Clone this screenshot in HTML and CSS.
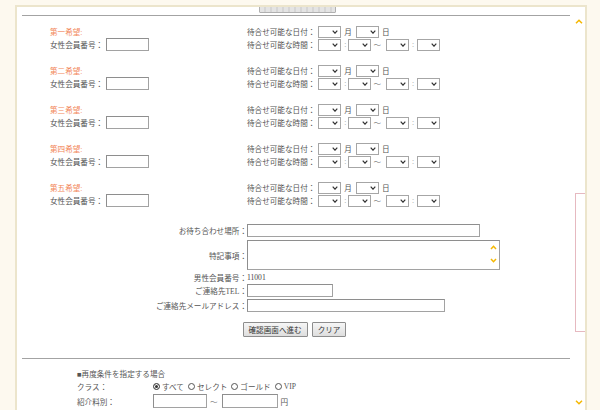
FILE: index.html
```html
<!DOCTYPE html>
<html lang="ja">
<head>
<meta charset="utf-8">
<link rel="stylesheet" href="styles.css">
</head>
<body>
<div class="frame">
  <div class="content">
    <div class="topbtn-wrap"><span class="btn topbtn"></span></div>
    <div class="rule"></div>

    <div class="wishes">
      <div class="wish">
        <div class="wl">
          <div class="line ttl">第一希望:</div>
          <div class="line">女性会員番号：<input class="inp w42 m3" type="text"></div>
        </div>
        <div class="wr">
          <div class="line">待合せ可能な日付：<span class="sel m3"><svg width="6" height="4" viewBox="0 0 6 4"><path d="M0.7 0.7L3 3.2L5.3 0.7"/></svg></span><span class="m3">月</span><span class="sel m4"><svg width="6" height="4" viewBox="0 0 6 4"><path d="M0.7 0.7L3 3.2L5.3 0.7"/></svg></span><span class="m3">日</span></div>
          <div class="line">待合せ可能な時間：<span class="sel m3"><svg width="6" height="4" viewBox="0 0 6 4"><path d="M0.7 0.7L3 3.2L5.3 0.7"/></svg></span><span class="col">:</span><span class="sel m2"><svg width="6" height="4" viewBox="0 0 6 4"><path d="M0.7 0.7L3 3.2L5.3 0.7"/></svg></span><span class="m2 wave">〜</span><span class="sel m5"><svg width="6" height="4" viewBox="0 0 6 4"><path d="M0.7 0.7L3 3.2L5.3 0.7"/></svg></span><span class="col m4">:</span><span class="sel m3"><svg width="6" height="4" viewBox="0 0 6 4"><path d="M0.7 0.7L3 3.2L5.3 0.7"/></svg></span></div>
        </div>
      </div>

      <div class="wish">
        <div class="wl">
          <div class="line ttl">第二希望:</div>
          <div class="line">女性会員番号：<input class="inp w42 m3" type="text"></div>
        </div>
        <div class="wr">
          <div class="line">待合せ可能な日付：<span class="sel m3"><svg width="6" height="4" viewBox="0 0 6 4"><path d="M0.7 0.7L3 3.2L5.3 0.7"/></svg></span><span class="m3">月</span><span class="sel m4"><svg width="6" height="4" viewBox="0 0 6 4"><path d="M0.7 0.7L3 3.2L5.3 0.7"/></svg></span><span class="m3">日</span></div>
          <div class="line">待合せ可能な時間：<span class="sel m3"><svg width="6" height="4" viewBox="0 0 6 4"><path d="M0.7 0.7L3 3.2L5.3 0.7"/></svg></span><span class="col">:</span><span class="sel m2"><svg width="6" height="4" viewBox="0 0 6 4"><path d="M0.7 0.7L3 3.2L5.3 0.7"/></svg></span><span class="m2 wave">〜</span><span class="sel m5"><svg width="6" height="4" viewBox="0 0 6 4"><path d="M0.7 0.7L3 3.2L5.3 0.7"/></svg></span><span class="col m4">:</span><span class="sel m3"><svg width="6" height="4" viewBox="0 0 6 4"><path d="M0.7 0.7L3 3.2L5.3 0.7"/></svg></span></div>
        </div>
      </div>

      <div class="wish">
        <div class="wl">
          <div class="line ttl">第三希望:</div>
          <div class="line">女性会員番号：<input class="inp w42 m3" type="text"></div>
        </div>
        <div class="wr">
          <div class="line">待合せ可能な日付：<span class="sel m3"><svg width="6" height="4" viewBox="0 0 6 4"><path d="M0.7 0.7L3 3.2L5.3 0.7"/></svg></span><span class="m3">月</span><span class="sel m4"><svg width="6" height="4" viewBox="0 0 6 4"><path d="M0.7 0.7L3 3.2L5.3 0.7"/></svg></span><span class="m3">日</span></div>
          <div class="line">待合せ可能な時間：<span class="sel m3"><svg width="6" height="4" viewBox="0 0 6 4"><path d="M0.7 0.7L3 3.2L5.3 0.7"/></svg></span><span class="col">:</span><span class="sel m2"><svg width="6" height="4" viewBox="0 0 6 4"><path d="M0.7 0.7L3 3.2L5.3 0.7"/></svg></span><span class="m2 wave">〜</span><span class="sel m5"><svg width="6" height="4" viewBox="0 0 6 4"><path d="M0.7 0.7L3 3.2L5.3 0.7"/></svg></span><span class="col m4">:</span><span class="sel m3"><svg width="6" height="4" viewBox="0 0 6 4"><path d="M0.7 0.7L3 3.2L5.3 0.7"/></svg></span></div>
        </div>
      </div>

      <div class="wish">
        <div class="wl">
          <div class="line ttl">第四希望:</div>
          <div class="line">女性会員番号：<input class="inp w42 m3" type="text"></div>
        </div>
        <div class="wr">
          <div class="line">待合せ可能な日付：<span class="sel m3"><svg width="6" height="4" viewBox="0 0 6 4"><path d="M0.7 0.7L3 3.2L5.3 0.7"/></svg></span><span class="m3">月</span><span class="sel m4"><svg width="6" height="4" viewBox="0 0 6 4"><path d="M0.7 0.7L3 3.2L5.3 0.7"/></svg></span><span class="m3">日</span></div>
          <div class="line">待合せ可能な時間：<span class="sel m3"><svg width="6" height="4" viewBox="0 0 6 4"><path d="M0.7 0.7L3 3.2L5.3 0.7"/></svg></span><span class="col">:</span><span class="sel m2"><svg width="6" height="4" viewBox="0 0 6 4"><path d="M0.7 0.7L3 3.2L5.3 0.7"/></svg></span><span class="m2 wave">〜</span><span class="sel m5"><svg width="6" height="4" viewBox="0 0 6 4"><path d="M0.7 0.7L3 3.2L5.3 0.7"/></svg></span><span class="col m4">:</span><span class="sel m3"><svg width="6" height="4" viewBox="0 0 6 4"><path d="M0.7 0.7L3 3.2L5.3 0.7"/></svg></span></div>
        </div>
      </div>

      <div class="wish">
        <div class="wl">
          <div class="line ttl">第五希望:</div>
          <div class="line">女性会員番号：<input class="inp w42 m3" type="text"></div>
        </div>
        <div class="wr">
          <div class="line">待合せ可能な日付：<span class="sel m3"><svg width="6" height="4" viewBox="0 0 6 4"><path d="M0.7 0.7L3 3.2L5.3 0.7"/></svg></span><span class="m3">月</span><span class="sel m4"><svg width="6" height="4" viewBox="0 0 6 4"><path d="M0.7 0.7L3 3.2L5.3 0.7"/></svg></span><span class="m3">日</span></div>
          <div class="line">待合せ可能な時間：<span class="sel m3"><svg width="6" height="4" viewBox="0 0 6 4"><path d="M0.7 0.7L3 3.2L5.3 0.7"/></svg></span><span class="col">:</span><span class="sel m2"><svg width="6" height="4" viewBox="0 0 6 4"><path d="M0.7 0.7L3 3.2L5.3 0.7"/></svg></span><span class="m2 wave">〜</span><span class="sel m5"><svg width="6" height="4" viewBox="0 0 6 4"><path d="M0.7 0.7L3 3.2L5.3 0.7"/></svg></span><span class="col m4">:</span><span class="sel m3"><svg width="6" height="4" viewBox="0 0 6 4"><path d="M0.7 0.7L3 3.2L5.3 0.7"/></svg></span></div>
        </div>
      </div>
    </div>

    <div class="form">
      <div class="frow r1"><div class="lab">お待ち合わせ場所：</div><input class="inp w233 h13" type="text"></div>
      <div class="frow r2"><div class="lab">特記事項：</div>
        <div class="ta">
          <div class="ta-arrows">
            <svg width="7" height="5" viewBox="0 0 7 5"><path class="gold" d="M1 4L3.5 1.3L6 4"/></svg>
            <svg width="7" height="5" viewBox="0 0 7 5"><path class="gold" d="M1 1L3.5 3.7L6 1"/></svg>
          </div>
        </div>
      </div>
      <div class="frow r3"><div class="lab">男性会員番号：</div><span class="val">11001</span></div>
      <div class="frow r4"><div class="lab">ご連絡先TEL：</div><input class="inp w86 h13" type="text"></div>
      <div class="frow r5"><div class="lab">ご連絡先メールアドレス：</div><input class="inp w198 h13" type="text"></div>
      <div class="btns"><span class="btn">確認画面へ進む</span><span class="btn">クリア</span></div>
    </div>

    <div class="rule rule2"></div>

    <div class="cond">
      <div class="cline">■再度条件を指定する場合</div>
      <div class="cline crow"><div class="clab">クラス：</div>
        <span class="radio on"></span><span class="rtxt">すべて</span>
        <span class="radio"></span><span class="rtxt">セレクト</span>
        <span class="radio"></span><span class="rtxt">ゴールド</span>
        <span class="radio"></span><span class="rtxt">VIP</span>
      </div>
      <div class="cline crow c3"><div class="clab">紹介料別：</div>
        <input class="inp w54 h14" type="text"><span class="wave m3">〜</span><input class="inp w56 h14 m4" type="text"><span class="m3">円</span>
      </div>
    </div>
  </div>

  <div class="sbar">
    <svg width="8" height="5" viewBox="0 0 8 5"><path class="gold" d="M1 4.2L4 1.2L7 4.2"/></svg>
    <div class="thumb"></div>
    <svg class="down" width="8" height="5" viewBox="0 0 8 5"><path class="gold" d="M1 0.8L4 3.8L7 0.8"/></svg>
  </div>
</div>
</body>
</html>
```

FILE: styles.css
```css
* { box-sizing: border-box; }
html, body { margin: 0; padding: 0; }
body {
  background: #fdf9ef;
  font-family: "Liberation Serif", "Noto Sans CJK JP", serif;
  font-size: 7.6px;
  color: #555;
  height: 410px;
  overflow: hidden;
}
.frame {
  margin: 5px 0 0 15px;
  width: 572px;
  height: 420px;
  border: 2px solid #ece5cc;
  border-bottom: none;
  background: #fff;
  display: flex;
  overflow: hidden;
}
.content { width: 555px; flex: none; }

.topbtn-wrap {
  height: 8px;
  overflow: hidden;
  display: flex;
  justify-content: center;
  align-items: flex-end;
  padding: 0 0 2px 0;
  margin-left: 6px;
}
.btn {
  display: inline-flex;
  align-items: center;
  justify-content: center;
  height: 15px;
  padding: 0 5px;
  border: 1px solid #8d8d8d;
  background: linear-gradient(#f6f6f6, #dedede);
  color: #333;
  border-radius: 1px;
}
.topbtn {
  width: 77px;
  flex: none;
  border-color: #b0b0b0;
  background: repeating-linear-gradient(90deg, #e4e4e4 0 4px, #d6d6d6 4px 6px);
}

.rule { height: 1px; background: #a3a3a3; margin-left: 5px; width: 548px; }
.rule2 { margin-top: 21px; }

.wishes { margin-top: 9px; padding-left: 33px; }
.wish { display: flex; margin-bottom: 13px; }
.wish:last-child { margin-bottom: 0; }
.wl { width: 197px; }
.line { display: flex; align-items: center; height: 13px; white-space: nowrap; }
.ttl { color: #f2875a; }

.inp {
  border: 1px solid #a2a2a2;
  border-top-color: #8e8e8e;
  border-left-color: #8e8e8e;
  background: #fff;
  padding: 0;
  margin: 0;
  height: 13px;
  font: inherit;
  outline: none;
}
.w42 { width: 43px; }
.w233 { width: 233px; }
.w86 { width: 86px; }
.w198 { width: 198px; }
.w54 { width: 54px; }
.w56 { width: 56px; }
.h13 { height: 13px; }
.h14 { height: 14px; }

.sel {
  width: 23px;
  height: 12px;
  border: 1px solid #a6a6a6;
  background: #fff;
  display: inline-flex;
  align-items: center;
  justify-content: flex-end;
  padding-right: 2px;
  flex: none;
}
.sel path { fill: none; stroke: #333; stroke-width: 1.2; }
.gold { fill: none; stroke: #f5b700; stroke-width: 1.5; }

.m2 { margin-left: 2px; }
.m3 { margin-left: 3px; }
.m4 { margin-left: 4px; }
.m5 { margin-left: 5px; }
.col { margin-left: 3px; color: #999; }
.wave { color: #888; }

.form { margin-top: 17px; }
.frow { display: flex; align-items: center; }
.lab { width: 230px; text-align: right; white-space: nowrap; }
.r2 { margin-top: 3px; }
.r3 { height: 14px; }
.r5 { margin-top: 2px; }
.val { color: #444; }
.ta {
  width: 253px;
  height: 30px;
  border: 1px solid #a2a2a2;
  border-top-color: #8e8e8e;
  border-left-color: #8e8e8e;
  display: flex;
  justify-content: flex-end;
}
.ta-arrows {
  display: flex;
  flex-direction: column;
  justify-content: space-between;
  padding: 4px 2px 6px 0;
}
.btns { display: flex; justify-content: center; gap: 4px; margin-top: 10px; }

.cond { padding-left: 60px; margin-top: 8px; }
.cline { height: 13px; display: flex; align-items: center; white-space: nowrap; }
.clab { width: 76px; }
.c3 { height: 14px; margin-top: 1px; }
.radio {
  width: 7px;
  height: 7px;
  border: 1px solid #555;
  border-radius: 50%;
  background: #fff;
  margin-left: 4px;
  flex: none;
}
.radio:first-of-type { margin-left: 0; }
.radio.on { background: #333; box-shadow: inset 0 0 0 1px #fff; }
.rtxt { margin-left: 2px; }

.sbar {
  width: 13px;
  flex: none;
  display: flex;
  flex-direction: column;
  align-items: center;
  padding-top: 12px;
}
.thumb {
  width: 11px;
  height: 139px;
  margin-top: 169px;
  margin-left: 4px;
  border: 1px solid #e6b9c0;
  background: #fff;
}
.down { margin-top: 68px; }
```
